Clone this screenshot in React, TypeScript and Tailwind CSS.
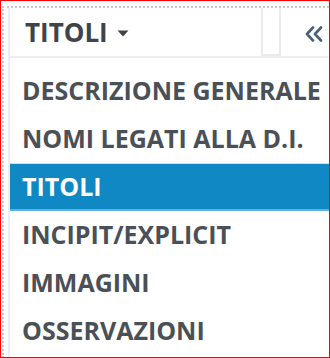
import React from "react";

const items = [
  "DESCRIZIONE GENERALE",
  "NOMI LEGATI ALLA D.I.",
  "TITOLI",
  "INCIPIT/EXPLICIT",
  "IMMAGINI",
  "OSSERVAZIONI",
];

export default function App() {
  return (
    <div
      className="w-[330px] h-[358px] bg-white border border-[#ff0000] overflow-hidden"
      style={{ fontFamily: '"Open Sans", "Liberation Sans", sans-serif' }}
    >
      <div className="mt-[5px] ml-[1px] h-[352px] border-t-2 border-l-2 border-dotted border-[#c8c8c8] pl-[4px]">
        <div className="h-full border-l-2 border-[#eceef1] flex flex-col">
          <div className="h-[50px] flex items-center border-b-2 border-[#eeeeee] shrink-0">
            <div className="flex items-center pl-[15px] text-[#3f444a] text-[26px] font-bold leading-none">
              <span>TITOLI</span>
              <svg width="12" height="7" viewBox="0 0 12 7" className="ml-[9px] mt-[2px]">
                <path d="M0.5 0.5 L11.5 0.5 L6 6.5 Z" fill="#3f444a" />
              </svg>
            </div>
            <div className="flex-1" />
            <div className="w-[20px] h-full border-x-2 border-b-2 border-[#e8eaee]" />
            <div className="w-[48px] flex items-center justify-end pr-[6px] pt-[4px]">
              <svg width="18" height="16" viewBox="0 0 18 16">
                <path
                  d="M8 1.5 L2 8 L8 14.5 M16 1.5 L10 8 L16 14.5"
                  fill="none"
                  stroke="#4a5f78"
                  strokeWidth="2.6"
                  strokeLinecap="round"
                  strokeLinejoin="round"
                />
              </svg>
            </div>
          </div>
          <div className="pt-[9px] flex flex-col">
            {items.map((t) => {
              const active = t === "TITOLI";
              return (
                <div
                  key={t}
                  className={
                    active
                      ? "h-[48px] flex items-center pl-[12px] bg-[#0f88c4] text-white text-[25px] font-bold border-t border-[#d8dde2] border-b-2 border-b-[#5fb0dc]"
                      : "h-[48px] flex items-center pl-[12px] text-[#4b5057] text-[25px] font-bold"
                  }
                >
                  {t}
                </div>
              );
            })}
          </div>
        </div>
      </div>
    </div>
  );
}
